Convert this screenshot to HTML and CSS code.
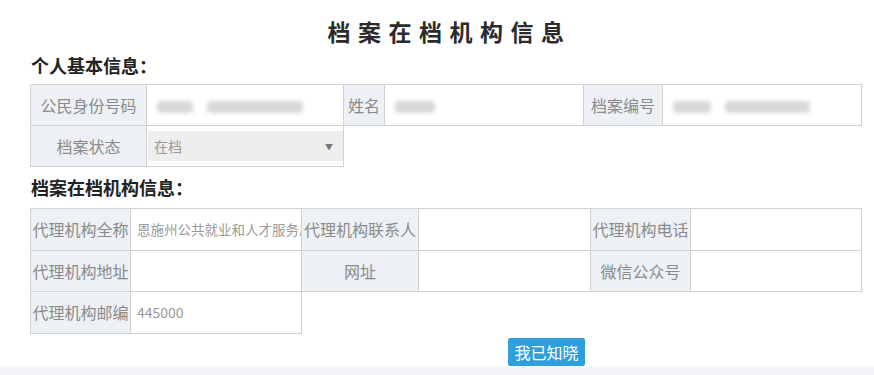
FILE: index.html
```html
<!DOCTYPE html>
<html>
    <head>
        <title>档案在档机构信息</title>
        <meta charset="UTF-8" />
        <meta name="viewport" content="width=device-width, initial-scale=1.0" />
        <link rel="stylesheet" href="styles.css">
    </head>
    <body>
        <div class="page">
            <h1 class="title">档案在档机构信息</h1>

            <h2 class="section">个人基本信息：</h2>
            <table class="grid grid-person">
                <colgroup>
                    <col style="width:116px"><col style="width:197px"><col style="width:41px">
                    <col style="width:199px"><col style="width:79px"><col style="width:199px">
                </colgroup>
                <tr>
                    <td class="label">公民身份号码</td>
                    <td class="value"><span class="blur" style="width:36px"></span><span class="blur" style="width:96px"></span></td>
                    <td class="label">姓名</td>
                    <td class="value"><span class="blur" style="width:40px"></span></td>
                    <td class="label">档案编号</td>
                    <td class="value"><span class="blur" style="width:38px"></span><span class="blur" style="width:85px"></span></td>
                </tr>
                <tr>
                    <td class="label">档案状态</td>
                    <td class="value select-cell">
                        <div class="select">
                            <span>在档</span>
                            <span class="arrow">▼</span>
                        </div>
                    </td>
                    <td class="empty" colspan="4"></td>
                </tr>
            </table>

            <h2 class="section section-second">档案在档机构信息：</h2>
            <table class="grid grid-agency">
                <colgroup>
                    <col style="width:100px"><col style="width:171px"><col style="width:117px">
                    <col style="width:172px"><col style="width:100px"><col style="width:171px">
                </colgroup>
                <tr>
                    <td class="label">代理机构全称</td>
                    <td class="value"><div class="clip">恩施州公共就业和人才服务局</div></td>
                    <td class="label">代理机构联系人</td>
                    <td class="value"></td>
                    <td class="label">代理机构电话</td>
                    <td class="value"></td>
                </tr>
                <tr>
                    <td class="label">代理机构地址</td>
                    <td class="value"></td>
                    <td class="label">网址</td>
                    <td class="value"></td>
                    <td class="label">微信公众号</td>
                    <td class="value"></td>
                </tr>
                <tr>
                    <td class="label">代理机构邮编</td>
                    <td class="value">445000</td>
                    <td class="empty" colspan="4"></td>
                </tr>
            </table>

            <div class="actions">
                <button class="btn">我已知晓</button>
            </div>
        </div>
        <div class="footer"></div>
    </body>
</html>
```

FILE: styles.css
```css
body {
    margin: 0;
    background: #fff;
    font-family: "Noto Sans CJK SC", "Liberation Sans", sans-serif;
    color: #333;
}

.page {
    padding: 14px 13px 0 30px;
}

.title {
    margin: 0;
    padding-left: 8px;
    font-size: 23px;
    line-height: 34px;
    letter-spacing: 7.5px;
    text-align: center;
    font-weight: bold;
    color: #2b2b2b;
}

.section {
    margin: 5px 0 7px 1px;
    font-size: 18px;
    line-height: 24px;
    font-weight: bold;
    color: #222;
}

.section-second {
    margin-top: 8px;
    margin-bottom: 9px;
}

.grid {
    border-collapse: collapse;
    table-layout: fixed;
    width: 831px;
}

.grid td {
    border: 1px solid #d2d2d2;
    height: 40px;
    padding: 0;
    vertical-align: middle;
}

.grid-agency td {
    height: 40.5px;
}

.grid td.empty {
    border: none;
}

.label {
    background: #edf1f5;
    color: #8a8a8a;
    font-size: 16px;
    text-align: center;
    white-space: nowrap;
    overflow: hidden;
}

.value {
    background: #fff;
    color: #999;
    font-size: 14px;
    padding-left: 6px !important;
    white-space: nowrap;
    overflow: hidden;
}

.clip {
    overflow: hidden;
    white-space: nowrap;
    font-size: 13.5px;
}

.blur {
    display: inline-block;
    height: 12px;
    margin: 0 10px 0 4px;
    vertical-align: middle;
    background: #d8d8d8;
    border-radius: 4px;
    filter: blur(2px);
}

.select-cell {
    padding: 0 0 0 1px !important;
}

.select {
    display: flex;
    justify-content: space-between;
    align-items: center;
    height: 30px;
    padding: 0 10px 0 6px;
    background: #eeeeee;
    color: #999;
    font-size: 14px;
}

.arrow {
    font-size: 8px;
    color: #777;
}

.actions {
    padding: 4px 0 0 478px;
}

.btn {
    width: 77px;
    height: 28px;
    border: none;
    border-radius: 2px;
    background: #2f9fdc;
    color: #fff;
    font-family: "Noto Sans CJK SC", sans-serif;
    font-size: 16px;
    padding: 0;
}

.footer {
    margin-top: 1px;
    height: 20px;
    background: #f3f5f8;
}
```
